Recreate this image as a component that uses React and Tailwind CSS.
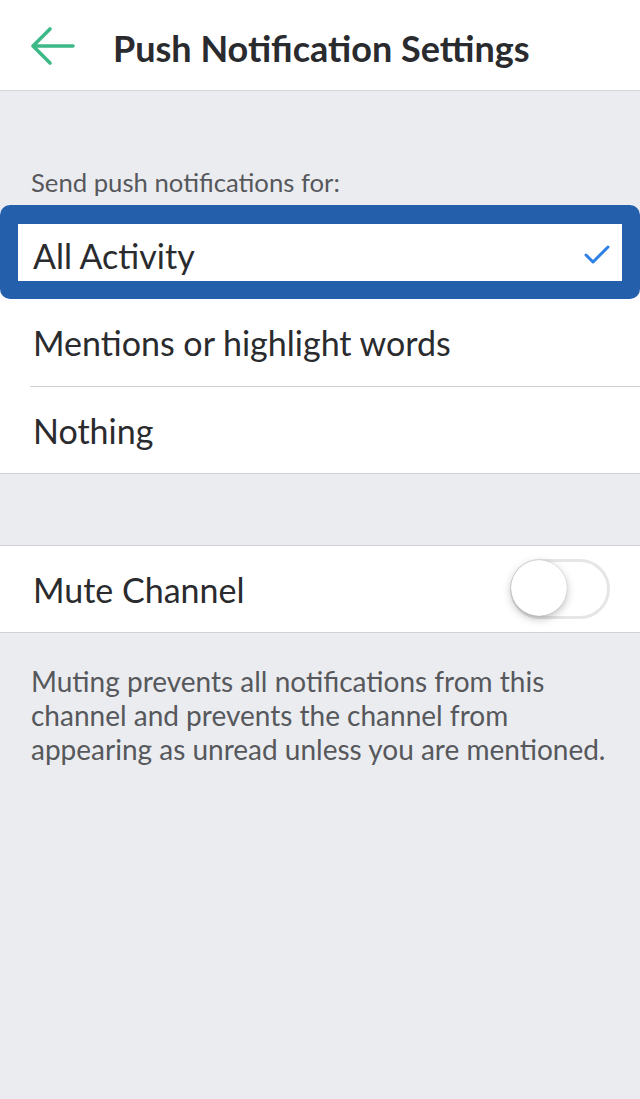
import { useState } from 'react'

function BackArrow() {
  return (
    <svg width="46" height="40" viewBox="0 0 46 40" fill="none">
      <path d="M3 20 H43 M3 20 L20 3 M3 20 L20 37" stroke="#3db887" strokeWidth="3.6" strokeLinecap="round" strokeLinejoin="round" />
    </svg>
  )
}

function Check() {
  return (
    <svg width="26" height="20" viewBox="0 0 26 20" fill="none">
      <path d="M2 10 L9 17 L24 2" stroke="#2f80e4" strokeWidth="3" strokeLinecap="round" strokeLinejoin="round" />
    </svg>
  )
}

export default function App() {
  const [selected] = useState('all')
  const [muted, setMuted] = useState(false)

  const options = [
    { id: 'all', label: 'All Activity', h: 'h-[88px]' },
    { id: 'mentions', label: 'Mentions or highlight words', h: 'h-[87px]' },
    { id: 'none', label: 'Nothing', h: 'h-[86px]' },
  ]

  return (
    <div className="min-h-[1099px] bg-[#ebecf0] text-[#2a2b2e]" style={{ fontFamily: 'Lato, "Open Sans", sans-serif' }}>
      <div className="h-[91px] bg-white border-b border-[#d6d7db] flex items-center">
        <div className="w-[113px] pl-[30px] pt-[2px] flex items-center">
          <BackArrow />
        </div>
        <h1 className="text-[36px] font-bold pt-[5px]">Push Notification Settings</h1>
      </div>

      <div className="pt-[76px] pb-[14px] px-[31px] text-[25.7px] text-[#56585c] leading-[30px]">
        Send push notifications for:
      </div>

      <div className="bg-white border-b border-[#cfd0d4]">
        {options.map((opt, i) => (
          <div key={opt.id} className="relative">
            {opt.id === selected && (
              <div className="absolute left-0 right-0 top-[-6px] bottom-0 rounded-[10px] border-[#235fab] border-l-[18px] border-r-[18px] border-t-[19px] border-b-[18px] pointer-events-none z-10" />
            )}
            <div className="pl-[33px] pr-[30px]">
              <div className={`${opt.h} flex items-center justify-between`}>
                <span className="text-[34px]">{opt.label}</span>
                {opt.id === selected && <Check />}
              </div>
            </div>
            {i === 1 && <div className="ml-[30px] h-px bg-[#cfd0d4]" />}
          </div>
        ))}
      </div>

      <div className="h-[71px]" />

      <div className="bg-white border-t border-b border-[#cfd0d4] h-[88px] flex items-center justify-between pl-[33px] pr-[30px]">
        <span className="text-[34px]">Mute Channel</span>
        <button
          onClick={() => setMuted(!muted)}
          className={`relative w-[100px] h-[60px] rounded-full border-[3px] ${muted ? 'bg-[#4cd964] border-[#4cd964]' : 'bg-white border-[#e6e6e6]'}`}
        >
          <span className={`absolute top-[-2px] ${muted ? 'left-[38px]' : 'left-[-2px]'} w-[56px] h-[56px] rounded-full bg-white shadow-[0_3px_8px_rgba(0,0,0,0.25),0_0_1px_rgba(0,0,0,0.3)]`} />
        </button>
      </div>

      <p className="px-[31px] pt-[31px] text-[28px] leading-[34px] text-[#56585c]">
        Muting prevents all notifications from this channel and prevents the channel from appearing as unread unless you are mentioned.
      </p>
    </div>
  )
}
